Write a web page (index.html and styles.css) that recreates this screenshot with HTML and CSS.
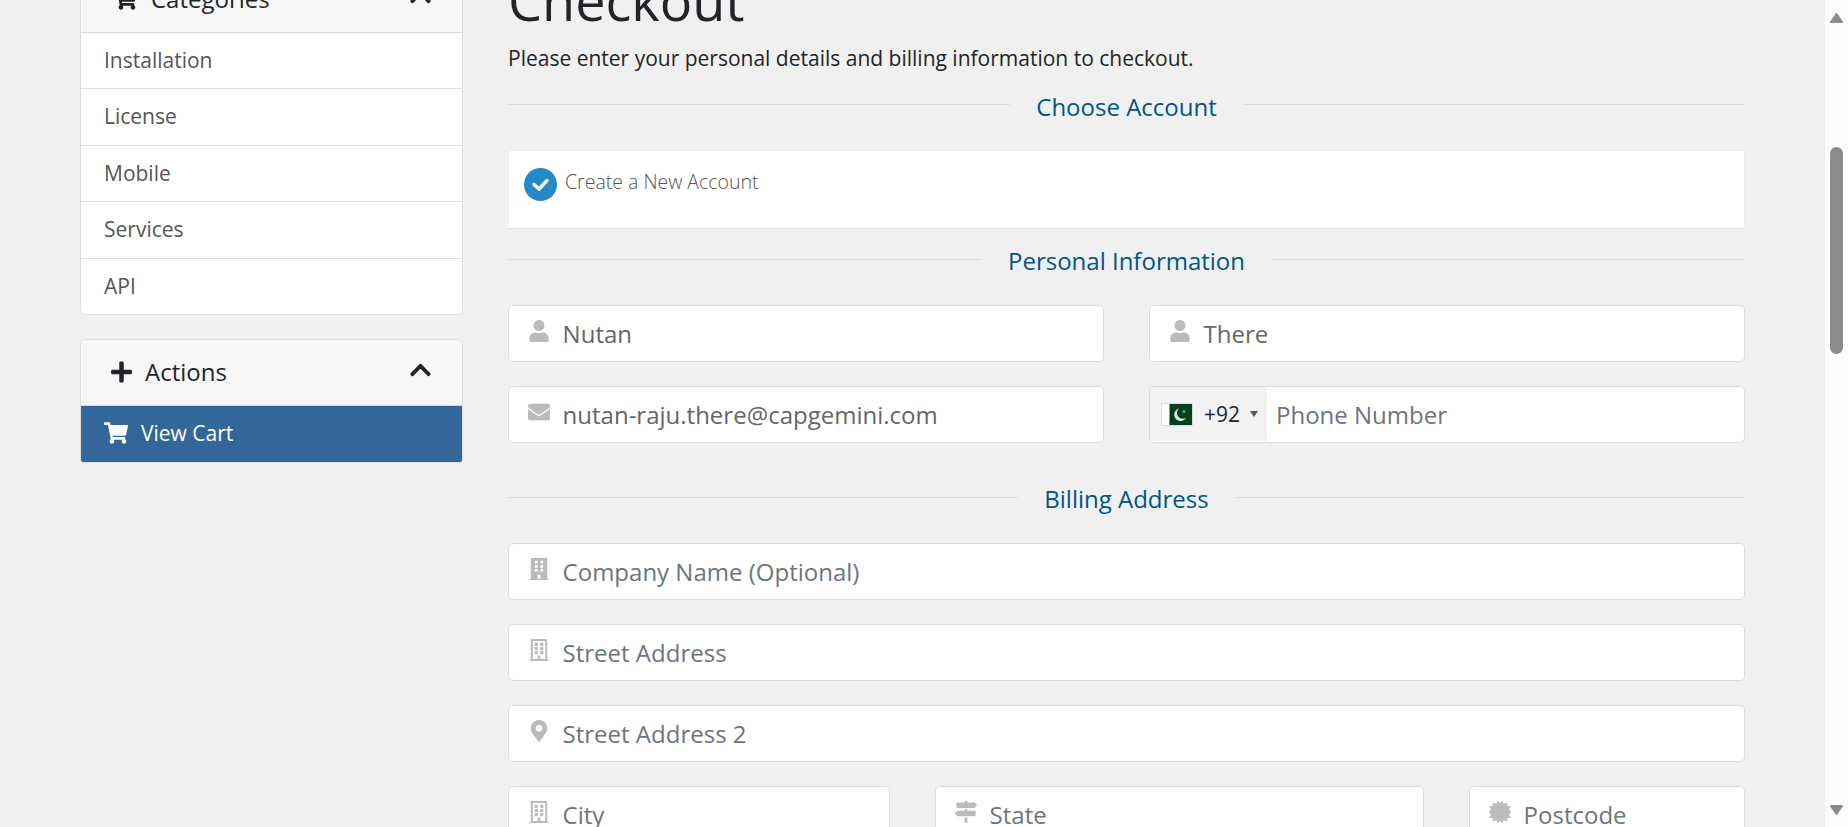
FILE: index.html
```html
<!DOCTYPE html>
<html lang="en">
<head>
<meta charset="utf-8">
<title>Checkout</title>
<link rel="stylesheet" href="styles.css">
</head>
<body>
<svg class="defs" width="0" height="0">
  <symbol id="cart" viewBox="0 0 576 512"><path d="M528.12 301.319l47.273-208C578.806 78.301 567.391 64 551.99 64H159.208l-9.166-44.81C147.758 8.021 137.93 0 126.529 0H24C10.745 0 0 10.745 0 24v16c0 13.255 10.745 24 24 24h69.883l70.248 343.435C147.325 417.1 136 435.222 136 456c0 30.928 25.072 56 56 56s56-25.072 56-56c0-15.674-6.447-29.835-16.824-40h209.647C430.447 426.165 424 440.326 424 456c0 30.928 25.072 56 56 56s56-25.072 56-56c0-22.172-12.888-41.332-31.579-50.405l5.517-24.276c3.413-15.018-8.002-29.319-23.403-29.319H218.117l-6.545-32h293.145c11.206 0 20.92-7.754 23.403-18.681z"/></symbol>
  <symbol id="plus" viewBox="0 0 448 512"><path d="M416 208H272V64c0-17.67-14.33-32-32-32h-32c-17.67 0-32 14.33-32 32v144H32c-17.67 0-32 14.33-32 32v32c0 17.67 14.33 32 32 32h144v144c0 17.67 14.33 32 32 32h32c17.67 0 32-14.33 32-32V304h144c17.67 0 32-14.33 32-32v-32c0-17.67-14.33-32-32-32z"/></symbol>
  <symbol id="chevron" viewBox="0 0 448 512"><path d="M240.971 130.524l194.343 194.343c9.373 9.373 9.373 24.569 0 33.941l-22.667 22.667c-9.357 9.357-24.522 9.375-33.901.04L224 227.495 69.255 381.516c-9.379 9.335-24.544 9.317-33.901-.04l-22.667-22.667c-9.373-9.373-9.373-24.569 0-33.941L207.03 130.525c9.372-9.373 24.568-9.373 33.941-.001z"/></symbol>
  <symbol id="user" viewBox="0 0 448 512"><path d="M224 256c70.7 0 128-57.3 128-128S294.7 0 224 0 96 57.3 96 128s57.3 128 128 128zm89.6 32h-16.7c-22.2 10.2-46.9 16-72.9 16s-50.6-5.8-72.9-16h-16.7C60.2 288 0 348.2 0 422.4V464c0 26.5 21.5 48 48 48h352c26.5 0 48-21.5 48-48v-41.6c0-74.2-60.2-134.4-134.4-134.4z"/></symbol>
  <symbol id="envelope" viewBox="0 0 512 512"><path d="M502.3 190.8c3.9-3.1 9.7-.2 9.7 4.7V400c0 26.5-21.5 48-48 48H48c-26.5 0-48-21.5-48-48V195.6c0-5 5.7-7.8 9.7-4.7 22.4 17.4 52.1 39.5 154.1 113.6 21.1 15.4 56.7 47.8 92.2 47.6 35.7.3 72-32.8 92.3-47.6 102-74.1 131.6-96.3 154-113.7zM256 320c23.2.4 56.6-29.2 73.4-41.4 132.7-96.3 142.8-104.7 173.4-128.7 5.8-4.5 9.2-11.5 9.2-18.9v-19c0-26.5-21.5-48-48-48H48c-26.5 0-48 21.5-48 48v19c0 7.4 3.4 14.3 9.2 18.9 30.6 23.9 40.7 32.4 173.4 128.7 16.8 12.2 50.2 41.8 73.4 41.4z"/></symbol>
  <symbol id="building" viewBox="0 0 448 512"><path fill-rule="evenodd" d="M436 480h-20V24c0-13.3-10.7-24-24-24H56C42.7 0 32 10.7 32 24v456H12c-6.6 0-12 5.4-12 12v20h448v-20c0-6.6-5.4-12-12-12zM128 64h64v64h-64zM256 64h64v64h-64zM128 160h64v64h-64zM256 160h64v64h-64zM128 256h64v64h-64zM256 256h64v64h-64zM192 396c0-6.6 5.4-12 12-12h40c6.6 0 12 5.4 12 12v84h-64z"/></symbol>
  <symbol id="building-o" viewBox="0 0 448 512"><path fill-rule="evenodd" d="M436 480h-20V24c0-13.3-10.7-24-24-24H56C42.7 0 32 10.7 32 24v456H12c-6.6 0-12 5.4-12 12v20h448v-20c0-6.6-5.4-12-12-12zM80 48h288v416H256v-68c0-6.6-5.4-12-12-12h-40c-6.6 0-12 5.4-12 12v68H80z"/><path d="M124 90h72v72h-72zM252 90h72v72h-72zM124 186h72v72h-72zM252 186h72v72h-72zM124 282h72v72h-72zM252 282h72v72h-72z"/></symbol>
  <symbol id="pin" viewBox="0 0 384 512"><path d="M172.268 501.67C26.97 291.031 0 269.413 0 192 0 85.961 85.961 0 192 0s192 85.961 192 192c0 77.413-26.97 99.031-172.268 309.67-9.535 13.774-29.93 13.773-39.464 0zM192 272c44.183 0 80-35.817 80-80s-35.817-80-80-80-80 35.817-80 80 35.817 80 80 80z"/></symbol>
  <symbol id="signs" viewBox="0 0 512 512"><path d="M507.31 84.69L464 41.37c-6-6-14.14-9.37-22.63-9.37H288V16c0-8.84-7.16-16-16-16h-32c-8.84 0-16 7.16-16 16v16H56c-13.25 0-24 10.75-24 24v80c0 13.25 10.75 24 24 24h385.37c8.49 0 16.62-3.37 22.63-9.37l43.31-43.31c6.25-6.26 6.25-16.38 0-22.63zM224 496c0 8.84 7.16 16 16 16h32c8.84 0 16-7.16 16-16V384h-64v112zm232-272H288v-32h-64v32H70.63c-8.49 0-16.62 3.37-22.63 9.37L4.69 276.69c-6.25 6.25-6.25 16.38 0 22.63L48 342.63c6 6 14.14 9.37 22.63 9.37H456c13.25 0 24-10.75 24-24v-80c0-13.25-10.75-24-24-24z"/></symbol>
  <symbol id="badge" viewBox="0 0 512 512"><path d="M256 52L300 7Q315-6 322 14L340 70L404 44Q428 36 428 62L426 116L486 120Q514 124 502 148L464 206L506 244Q520 256 506 268L464 306L502 364Q514 388 486 392L426 396L428 450Q428 476 404 468L340 442L322 498Q315 518 300 505L256 460L212 505Q197 518 190 498L172 442L108 468Q84 476 84 450L86 396L26 392Q-2 388 10 364L48 306L6 268Q-8 256 6 244L48 206L10 148Q-2 124 26 120L86 116L84 62Q84 36 108 44L172 70L190 14Q197-6 212 7Z"/></symbol>
</svg>

<div class="page">
  <aside class="sidebar">
    <section class="card card-categories">
      <header class="card-head"><svg class="head-icon icon-cart"><use href="#cart"/></svg><span>Categories</span><svg class="chevron"><use href="#chevron"/></svg></header>
      <a class="item">Installation</a>
      <a class="item item-tall">License</a>
      <a class="item">Mobile</a>
      <a class="item item-tall">Services</a>
      <a class="item">API</a>
    </section>
    <section class="card card-actions">
      <header class="card-head"><svg class="head-icon icon-plus"><use href="#plus"/></svg><span>Actions</span><svg class="chevron"><use href="#chevron"/></svg></header>
      <a class="item active"><svg class="item-icon"><use href="#cart"/></svg><span>View Cart</span></a>
    </section>
  </aside>

  <main class="main">
    <h1 class="title">Checkout</h1>
    <p class="intro">Please enter your personal details and billing information to checkout.</p>

    <h2 class="divider"><span>Choose Account</span></h2>
    <div class="account">
      <svg class="check" viewBox="0 0 33 33"><circle cx="16.5" cy="16.5" r="16.5" fill="#2489c5"/><path d="M10 16.5l5 4.5 8-8.5" fill="none" stroke="#fff" stroke-width="3.4" stroke-linecap="round" stroke-linejoin="miter"/></svg>
      <span class="account-label">Create a New Account</span>
    </div>

    <h2 class="divider divider-personal"><span>Personal Information</span></h2>
    <div class="row halves">
      <label class="field filled"><svg class="icon"><use href="#user"/></svg><span>Nutan</span></label>
      <label class="field filled"><svg class="icon"><use href="#user"/></svg><span>There</span></label>
    </div>
    <div class="row halves">
      <label class="field filled"><svg class="icon"><use href="#envelope"/></svg><span>nutan-raju.there@capgemini.com</span></label>
      <label class="field phone">
        <span class="country">
          <svg class="flag" viewBox="0 0 32 23"><rect width="32" height="23" rx="1" fill="#dcdcdc"/><rect x="1" y="1" width="30" height="21" fill="#fff"/><rect x="8.5" y="1" width="22.5" height="21" fill="#01411c"/><path d="M18 5.6a6.3 6.3 0 1 0 7.2 8.8A5.6 5.6 0 0 1 18 5.6z" fill="#dfe8e1"/><circle cx="23" cy="8.5" r="1.5" fill="#6f9a7e"/></svg>
          <span class="code">+92</span>
          <i class="caret"></i>
        </span>
        <span>Phone Number</span>
      </label>
    </div>

    <h2 class="divider divider-billing"><span>Billing Address</span></h2>
    <label class="field"><svg class="icon"><use href="#building"/></svg><span>Company Name (Optional)</span></label>
    <label class="field"><svg class="icon"><use href="#building-o"/></svg><span>Street Address</span></label>
    <label class="field"><svg class="icon"><use href="#pin"/></svg><span>Street Address 2</span></label>
    <div class="row thirds">
      <label class="field"><svg class="icon"><use href="#building-o"/></svg><span>City</span></label>
      <label class="field"><svg class="icon"><use href="#signs"/></svg><span>State</span></label>
      <label class="field"><svg class="icon"><use href="#badge"/></svg><span>Postcode</span></label>
    </div>
  </main>

  <div class="scrollbar">
    <svg class="arrow" viewBox="0 0 15 12"><path d="M7.5 2L13 10H2Z"/></svg>
    <i class="thumb"></i>
    <svg class="arrow arrow-down" viewBox="0 0 15 12"><path d="M7.5 10L13 2H2Z"/></svg>
  </div>
</div>
</body>
</html>
```
FILE: styles.css
```css
* { box-sizing: border-box; }
html, body { margin: 0; height: 100%; overflow: hidden; }
body { background: #f0f0f0; color: #212529; font-family: "Open Sans", "Noto Sans", sans-serif; font-size: 21px; }
svg { display: block; fill: currentColor; flex: none; }
.defs { position: absolute; }

.page { display: grid; grid-template-columns: 383px 1237px 1fr; grid-template-rows: 827px; column-gap: 45px; height: 827px; padding-left: 80px; overflow: hidden; }

/* Sidebar */
.sidebar { margin-top: -34px; }
.card { border: 1px solid #dedede; border-radius: 6px; background: #fff; overflow: hidden; }
.card-head { display: flex; align-items: center; height: 66px; padding: 0 31px 0 30px; background: #f7f7f7; border-bottom: 1px solid #d8d8d8; font-size: 24px; }
.card-head span { flex: 1; margin-top: -2px; }
.icon-plus { width: 21px; height: 24px; margin: -1px 13px 0 0; }
.icon-cart { width: 24px; height: 22px; margin: -1px 14px 0 2px; }
.chevron { width: 21px; height: 24px; margin-top: -6px; }
.card-categories { height: 349px; }
.item { display: flex; align-items: center; height: 56px; padding: 0 23px 2px; border-bottom: 1px solid #dedede; color: #555; }
.item-tall { height: 57px; padding-bottom: 3px; }
.item:last-child { border-bottom: 0; }
.card-actions { height: 124px; margin-top: 24px; border-radius: 6px 6px 3px 3px; }
.active { background: #336699; color: #fff; }
.item-icon { width: 24px; height: 22px; margin-right: 13px; }

/* Main column */
.title { margin: -39px 0 0; font-size: 54px; font-weight: 400; line-height: 78px; }
.intro { margin: 3px 0 0; line-height: 32px; }
.divider { display: flex; align-items: flex-start; gap: 26px; height: 36px; margin: 15px 0 0; font-size: 24px; font-weight: 400; line-height: 36px; color: #058; }
.divider::before, .divider::after { content: ""; flex: 1; height: 1px; margin-top: 15px; background: #dcdcdc; }
.account { display: flex; align-items: flex-start; gap: 8px; height: 79px; margin-top: 25px; padding: 17px 15px; background: #fff; border: 1px solid #ececec; border-bottom-color: #dee2e6; }
.check { width: 33px; height: 33px; }
.account-label { margin-top: -4px; font-size: 19.5px; font-weight: 300; line-height: 36px; color: #555; }
.divider-personal { margin-bottom: 25px; }
.divider-billing { margin: 39px 0 25px; }
.divider-personal, .divider-billing { line-height: 34px; }
.field { display: flex; align-items: center; height: 57px; padding: 0 19px; background: #fff; border: 1px solid #dcdcdc; border-radius: 5px; font-size: 24px; color: #6c757d; }
.filled { color: #666; }
.icon { width: 22px; height: 22px; margin: -5px 12.6px 0 0; color: #bbb; }
.row { display: grid; }
.row + .row, .field + .field, .field + .row { margin-top: 24px; }
.row .field { margin-top: 0; }
.halves { grid-template-columns: 596px 596px; column-gap: 45px; }
.thirds { grid-template-columns: 382px 489px 276px; column-gap: 45px; }
.phone { padding: 0; align-items: stretch; line-height: 56px; }
.country { display: flex; align-items: center; width: 117px; height: 54px; margin-right: 9px; padding-left: 11px; background: #f2f2f2; color: #212529; font-size: 21px; line-height: 52px; border-radius: 4px 0 0 4px; }
.flag { width: 32px; height: 23px; }
.code { margin: -1px 0 0 11px; }
.caret { margin-left: 10px; border: 4px solid transparent; border-top: 6px solid #555; border-bottom: 0; }

/* Scrollbar */
.scrollbar { display: flex; flex-direction: column; align-items: center; justify-self: end; width: 23px; padding: 12px 0 11px; background: #fcfcfc; color: #8b8b8b; }
.arrow { width: 15px; height: 12px; stroke: currentColor; stroke-width: 2px; stroke-linejoin: round; }
.thumb { width: 13px; height: 207px; margin-top: 123px; border-radius: 7px; background: #8b8b8b; }
.arrow-down { margin-top: auto; }
```
